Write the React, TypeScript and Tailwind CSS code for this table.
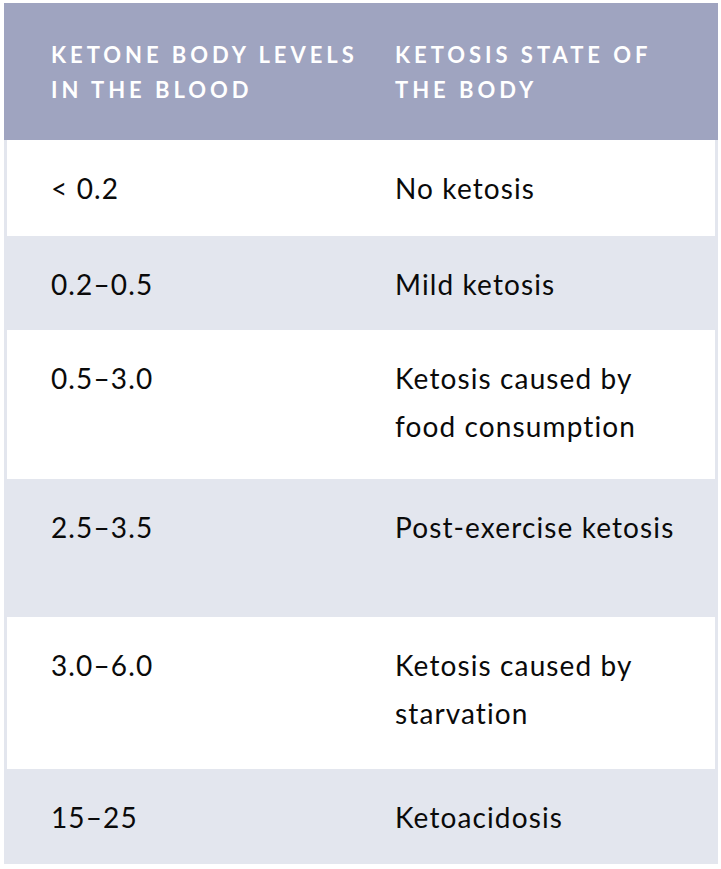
import React from "react";

const rows: { a: string; b: string[]; h: string; grey: boolean }[] = [
  { a: "< 0.2", b: ["No ketosis"], h: "h-[96px]", grey: false },
  { a: "0.2–0.5", b: ["Mild ketosis"], h: "h-[94px]", grey: true },
  { a: "0.5–3.0", b: ["Ketosis caused by", "food consumption"], h: "h-[149px]", grey: false },
  { a: "2.5–3.5", b: ["Post-exercise ketosis"], h: "h-[138px]", grey: true },
  { a: "3.0–6.0", b: ["Ketosis caused by", "starvation"], h: "h-[152px]", grey: false },
  { a: "15–25", b: ["Ketoacidosis"], h: "h-[95px]", grey: true },
];

export default function App() {
  return (
    <div className="w-[721px] h-[869px] bg-white pt-[3px] pl-[4px]" style={{ fontFamily: "Lato, 'Open Sans', sans-serif" }}>
      <div className="w-[714px]">
        <div className="h-[137px] bg-[#9fa4c0] grid grid-cols-[344px_1fr] pt-[34px] text-white font-bold text-[22px] leading-[35px] tracking-[0.18em] uppercase whitespace-nowrap">
          <div className="pl-[47px]">
            <div>Ketone body levels</div>
            <div>in the blood</div>
          </div>
          <div className="pl-[47px]">
            <div>Ketosis state of</div>
            <div>the body</div>
          </div>
        </div>
        {rows.map((r, i) => (
          <div
            key={i}
            className={`${r.h} ${r.grey ? "bg-[#e3e6ee]" : "bg-white"} border-x-[3px] border-[#e3e6ee] grid grid-cols-[341px_1fr] pt-[24px] text-[28px] leading-[48px] tracking-[0.04em] text-[#0a0a0a] whitespace-nowrap`}
          >
            <div className="pl-[44px]">{r.a}</div>
            <div className="pl-[47px]">
              {r.b.map((t, j) => (
                <div key={j}>{t}</div>
              ))}
            </div>
          </div>
        ))}
      </div>
    </div>
  );
}
